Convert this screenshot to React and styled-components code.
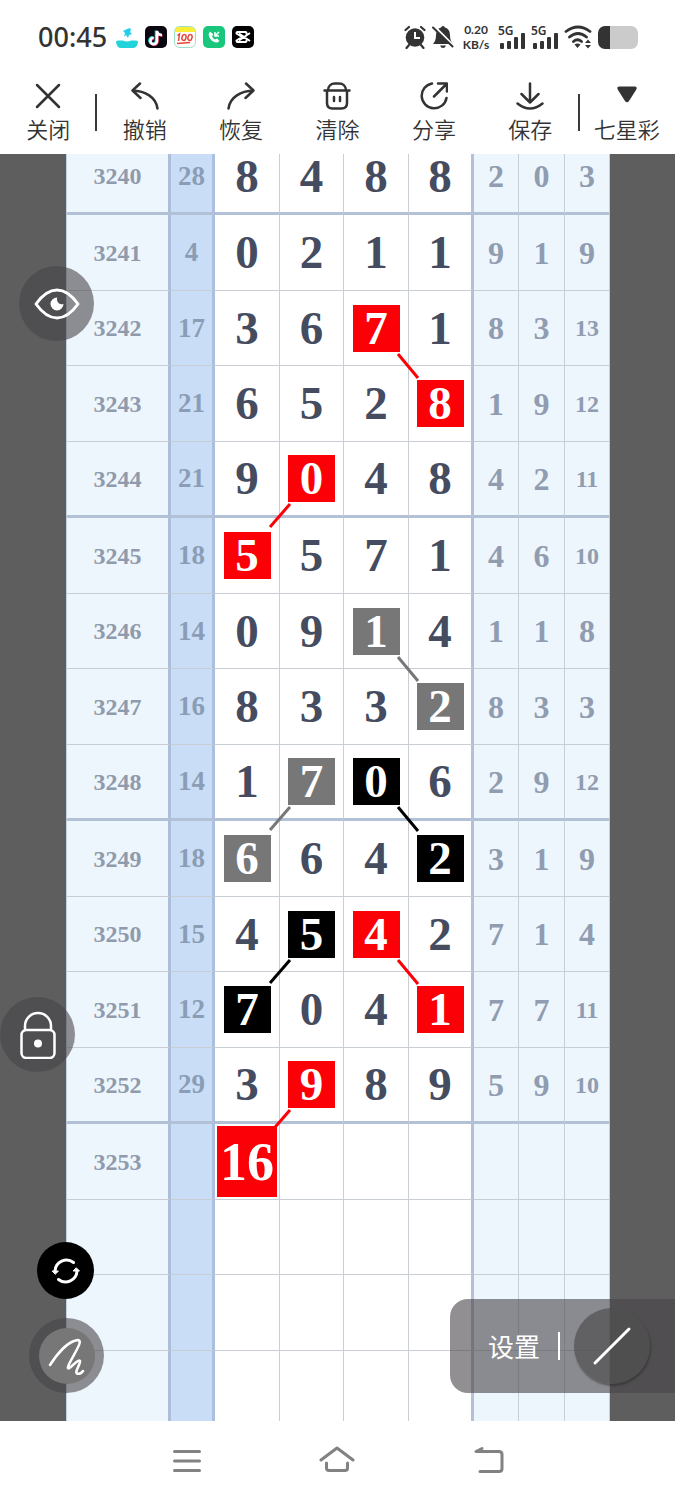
import React from "react"
import styled, { createGlobalStyle, css } from "styled-components"

const GlobalStyle = createGlobalStyle`
  * {
    box-sizing: border-box;
  }
  body {
    margin: 0;
    background: #fff;
    font-family: "Noto Sans", "Noto Sans CJK SC", sans-serif;
    color: #333;
  }
  button {
    margin: 0;
    padding: 0;
    border: none;
    background: none;
    color: inherit;
    font: inherit;
    cursor: pointer;
  }
  svg {
    display: block;
    flex: none;
  }
`

const Screen = styled.div`
  display: flex;
  flex-direction: column;
  height: 100vh;
  min-width: 480px;
  overflow: hidden;
`

const StatusBar = styled.header`
  display: flex;
  align-items: center;
  justify-content: space-between;
  height: 74px;
  padding: 0 37px 0 38px;
`

const StatusGroup = styled.div`
  display: flex;
  align-items: center;
  gap: ${props => props.gap}px;
`

const Clock = styled.time`
  margin-right: 2px;
  font-size: 27px;
  line-height: 32px;
  font-weight: 500;
`

const Speed = styled.div`
  display: flex;
  flex-direction: column;
  align-items: center;
  width: 32px;
  font-family: Lato, sans-serif;
  font-size: 12px;
  font-weight: bold;
  line-height: 15px;
`

const Signal = styled.div`
  display: flex;
  flex-direction: column;
  width: 27px;
  font-size: 12px;
  font-weight: 600;
  line-height: 10px;
`

const Bars = styled.div`
  display: flex;
  align-items: flex-end;
  justify-content: flex-end;
  gap: 3px;
  height: 13px;
`

const Bar = styled.span`
  width: 4px;
  height: ${props => props.height}px;
  border-radius: 1px;
  background: #333;
`

const Battery = styled.div`
  width: 40px;
  height: 23px;
  border-radius: 7px;
  background: linear-gradient(to right, #333 30%, #cbcbcb 30%);
`

const Toolbar = styled.nav`
  display: flex;
  height: 80px;
  padding-top: 8px;
`

const Tool = styled.button`
  flex: 1;
  display: flex;
  flex-direction: column;
  align-items: center;
  gap: 6px;
  height: 64px;
  font-size: 22px;
  font-weight: 350;
  line-height: 26px;
  white-space: nowrap;
`

const ToolDivider = styled.span`
  width: 2px;
  height: 37px;
  margin: 12px -1px 0;
  background: #3a3a3a;
`

const Board = styled.main`
  position: relative;
  flex: 1;
  min-height: 0;
  padding: 0 65px 0 66px;
  overflow: hidden;
  background: #5e5e5e;
`

// the first row is half scrolled out of the board
const Chart = styled.table`
  width: 100%;
  margin-top: -14px;
  table-layout: fixed;
  border-collapse: separate;
  border-spacing: 0;
  background: #fff;
  font-family: "Liberation Serif", serif;
  font-weight: bold;
  text-align: center;
`

const Col = styled.col`
  width: ${props => props.w}px;
`

const Row = styled.tr`
  height: ${props => (props.short ? 75 : 76)}px;
  td,
  th {
    border-bottom: ${props =>
      props.thick ? "3px solid #b3c1d6" : "1px solid #c9ced4"};
  }
`

const cell = css`
  padding: 0;
  line-height: 1;
  font-weight: bold;
`

const Period = styled.th`
  ${cell}
  border-right: 3px solid #adbfd8;
  border-left: 1px solid #c3d0e0;
  background: #edf5fd;
  color: #8f9bac;
  font-size: 24px;
`

const Sum = styled.td`
  ${cell}
  border-right: 3px solid #adbfdf;
  background: #c9ddf6;
  color: #8b9db5;
  font-size: 27px;
`

const Digit = styled.td`
  ${cell}
  position: relative;
  border-right: ${props =>
    props.last ? "3px solid #b3c1d6" : "1px solid #c9ced4"};
  color: #454c60;
  font-size: 47px;
`

const Side = styled.td`
  ${cell}
  border-right: 1px solid #c5cedb;
  background: #edf5fd;
  color: #909cb0;
  font-size: ${props => (props.small ? 24 : 32)}px;
`

const Mark = styled.span`
  display: flex;
  align-items: center;
  justify-content: center;
  width: ${props => (props.big ? 60 : 47)}px;
  height: ${props => (props.big ? 71 : 47)}px;
  margin: 0 auto;
  background: ${props => props.tone};
  color: #fff;
  font-size: ${props => (props.big ? 54 : 47)}px;
`

const Link = styled.svg`
  position: absolute;
  z-index: 1;
  bottom: -14px;
  ${props => (props.$dir === "right" ? "right: -12px;" : "left: -12px;")}
`

const Round = styled.button`
  position: absolute;
  display: flex;
  align-items: center;
  justify-content: center;
  z-index: 2;
  width: ${props => props.size}px;
  height: ${props => props.size}px;
  border-radius: 50%;
  background: ${props => props.tone || "rgba(70, 68, 72, 0.59)"};
  color: #fff;
`

const EyeButton = styled(Round)`
  top: 112px;
  left: 19px;
`

const LockButton = styled(Round)`
  top: 843px;
  left: 0;
`

const SyncButton = styled(Round)`
  bottom: 122px;
  left: 37px;
`

const PenButton = styled(Round)`
  bottom: 28px;
  left: 29px;
`

const PenCore = styled.span`
  display: flex;
  align-items: center;
  justify-content: center;
  width: 56px;
  height: 56px;
  border-radius: 50%;
  background: #777;
`

const Settings = styled.div`
  position: absolute;
  right: 0;
  bottom: 28px;
  z-index: 2;
  display: flex;
  align-items: center;
  width: 225px;
  height: 94px;
  padding-left: 38px;
  border-radius: 18px 0 0 18px;
  background: rgba(72, 68, 72, 0.6);
  color: #fff;
  font-size: 26px;
`

const SettingsDivider = styled.span`
  width: 2px;
  height: 28px;
  margin: 0 14px 0 18px;
  background: #fff;
`

const LineButton = styled.button`
  display: flex;
  align-items: center;
  justify-content: center;
  width: 76px;
  height: 76px;
  border-radius: 50%;
  background: rgba(80, 80, 80, 0.7);
  box-shadow: 1px 2px 2px rgba(40, 40, 40, 0.5);
`

const NavBar = styled.nav`
  display: flex;
  height: 79px;
  padding: 0 112px;
  color: #828282;
`

const NavButton = styled.button`
  flex: 1;
  display: flex;
  align-items: center;
  justify-content: center;
`

const Stroke = ({ size = 28, width = 2.5, children, ...rest }) =>
  <svg
    width={size}
    height={size}
    viewBox={`0 0 ${size} ${size}`}
    fill="none"
    stroke="currentColor"
    strokeWidth={width}
    strokeLinecap="round"
    strokeLinejoin="round"
    aria-hidden="true"
    {...rest}
  >
    {children}
  </svg>

const tools = [
  {
    label: "关闭",
    icon: <path d="M3 3l22 22M25 3L3 25" />,
    divider: true,
  },
  {
    label: "撤销",
    icon: <path d="M9 1.500L1.500 8.500l8 7.500M1.500 8.500C14 9 25 15 26.500 26.500" />,
  },
  {
    label: "恢复",
    icon: <path d="M19 1.500L26.500 8.500l-8 7.500M26.500 8.500C14 9 3 15 1.500 26.500" />,
  },
  {
    label: "清除",
    icon: (
      <path d="M1.500 8.500h25M5 8.500C5 4 8 1.500 12 1.500h4c4 0 7 2.500 7 7M4 8.500V21q0 5.500 5.500 5.500h9q5.500 0 5.500-5.500V8.500M11 15v4M17 15v4" />
    ),
  },
  {
    label: "分享",
    icon: (
      <path d="M12 1.500A12.500 12.500 0 1 0 26.500 16M14 14.500L26.500 2M18 1.500h9v8" />
    ),
  },
  {
    label: "保存",
    icon: <path d="M14 1.500v19M5.500 12l8.500 8.500 8.500-8.500M1.500 21.500q12.500 10 25 0" />,
    divider: true,
  },
  {
    label: "七星彩",
    icon: (
      <path
        d="M6.500 4.500h15q3.500 0 1.500 3.500l-7 11q-2 2.500-4 0L5 8q-2-3.500 1.500-3.500z"
        fill="currentColor"
        stroke="none"
      />
    ),
  },
]

const RED = "#fb0007"
const GRAY = "#777"
const BLACK = "#000"

// marks: column index -> [colour, direction of the line to the next row]
const rows = [
  { id: 3240, sum: 28, digits: "8488", side: [2, 0, 3], thick: true },
  { id: 3241, sum: 4, digits: "0211", side: [9, 1, 9] },
  { id: 3242, sum: 17, digits: "3671", side: [8, 3, 13], marks: { 2: [RED, "right"] } },
  { id: 3243, sum: 21, digits: "6528", side: [1, 9, 12], marks: { 3: [RED] } },
  { id: 3244, sum: 21, digits: "9048", side: [4, 2, 11], marks: { 1: [RED, "left"] }, thick: true },
  { id: 3245, sum: 18, digits: "5571", side: [4, 6, 10], marks: { 0: [RED] } },
  { id: 3246, sum: 14, digits: "0914", side: [1, 1, 8], marks: { 2: [GRAY, "right"] } },
  { id: 3247, sum: 16, digits: "8332", side: [8, 3, 3], marks: { 3: [GRAY] } },
  {
    id: 3248,
    sum: 14,
    digits: "1706",
    side: [2, 9, 12],
    marks: { 1: [GRAY, "left"], 2: [BLACK, "right"] },
    thick: true,
  },
  { id: 3249, sum: 18, digits: "6642", side: [3, 1, 9], marks: { 0: [GRAY], 3: [BLACK] } },
  { id: 3250, sum: 15, digits: "4542", side: [7, 1, 4], marks: { 1: [BLACK, "left"], 2: [RED, "right"] } },
  { id: 3251, sum: 12, digits: "7041", side: [7, 7, 11], marks: { 0: [BLACK], 3: [RED] } },
  { id: 3252, sum: 29, digits: "3989", side: [5, 9, 10], marks: { 1: [RED, "left"] }, thick: true },
  { id: 3253, digits: ["16"], marks: { 0: [RED] } },
  {},
  {},
  {},
]

const columns = [105, 44, 65, 64, 65, 65, 45, 46, 45]

const Connector = ({ dir, tone }) =>
  <Link $dir={dir} width="24" height="26" viewBox="0 0 24 26" aria-hidden="true">
    <path
      d={dir === "right" ? "M2 1L22 25" : "M22 1L2 24"}
      stroke={tone}
      strokeWidth="3"
    />
  </Link>

const DigitCell = ({ value, mark, last }) => {
  const [tone, dir] = mark || []
  return (
    <Digit last={last}>
      {mark
        ? <Mark tone={tone} big={value.length > 1}>{value}</Mark>
        : value}
      {dir && <Connector dir={dir} tone={tone} />}
    </Digit>
  )
}

const ChartRow = ({ row, short }) => {
  const { id, sum, digits = "", side = [], marks = {}, thick } = row
  return (
    <Row thick={thick} short={short}>
      <Period scope="row">{id}</Period>
      <Sum>{sum}</Sum>
      {[0, 1, 2, 3].map(i =>
        <DigitCell key={i} value={digits[i]} mark={marks[i]} last={i === 3} />
      )}
      {[0, 1, 2].map(i =>
        <Side key={i} small={side[i] > 9}>{side[i]}</Side>
      )}
    </Row>
  )
}

const SignalMeter = () =>
  <Signal>
    5G
    <Bars>
      {[6, 8, 12, 16].map(h => <Bar key={h} height={h} />)}
    </Bars>
  </Signal>

const AppIcons = () =>
  <StatusGroup gap={7}>
    <svg width="22" height="22" viewBox="0 0 22 22" aria-hidden="true">
      <path d="M0 16q0-1.500 2-1.500h5q4 2 8 0h5q2 0 2 1.500-1 6-5 6H5q-4 0-5-6z" fill="#22d3dc" />
      <path d="M7 5l4-2 3-1 1 2-1 2 2 2-3 1-1 3-2-3-2 2 1-4z" fill="#22cfe8" />
    </svg>
    <svg width="22" height="22" viewBox="0 0 22 22" aria-hidden="true">
      <rect width="22" height="22" rx="5" fill="#0b0710" />
      <g fill="none" strokeWidth="2.500">
        <path d="M11 4.500v10a3.300 3.300 0 1 1-3.300-3.300M11 4.500q.5 4 5 4" stroke="#27e5e3" />
        <path d="M12.500 5.500v10a3.300 3.300 0 1 1-3.300-3.300M12.500 5.500q.5 4 5 4" stroke="#f3305b" />
        <path d="M12 5v10a3.300 3.300 0 1 1-3.300-3.300M12 5q.5 4 5 4" stroke="#fff" />
      </g>
    </svg>
    <svg width="22" height="22" viewBox="0 0 22 22" aria-hidden="true">
      <rect x=".5" y=".5" width="21" height="21" rx="5" fill="#fff" stroke="#9ae0c4" />
      <path d="M1 6V5q0-4 4-4h12q4 0 4 4v1z" fill="#faed35" />
      <g fill="none" stroke="#e5493a" strokeWidth="1.500">
        <path d="M3.500 9.500L5.500 8 4.500 15M3 17.500l13-1" />
        <ellipse cx="10" cy="11.500" rx="2" ry="3" transform="rotate(15 10 11.500)" />
        <ellipse cx="16" cy="11.500" rx="2" ry="3" transform="rotate(15 16 11.500)" />
      </g>
    </svg>
    <svg width="22" height="22" viewBox="0 0 22 22" aria-hidden="true">
      <rect width="22" height="22" rx="5" fill="#18c77c" />
      <path
        d="M7 5.500q-2 2-1 5 2 5 7 6 2 0 3.500-1.500l-2.500-2.500-2 1q-2.500-1-3-3.500l1.500-1.500z"
        fill="#fff"
      />
      <path d="M12 6v4h4M12.500 9.500L16 6" fill="none" stroke="#fff" strokeWidth="1.500" />
    </svg>
    <svg width="22" height="22" viewBox="0 0 22 22" aria-hidden="true">
      <rect width="22" height="22" rx="5" fill="#000" />
      <path
        d="M18 7L7 14.500M18 15L7 7.500M14.500 8.500V7q0-1-1-1h-8q-1 0-1 1v.5L10 11l-5.500 3.500v.5q0 1 1 1h8q1 0 1-1v-1.500"
        fill="none"
        stroke="#fff"
        strokeWidth="2"
        strokeLinejoin="round"
      />
    </svg>
  </StatusGroup>

const AlarmIcon = () =>
  <svg width="22" height="24" viewBox="0 0 22 24" aria-hidden="true">
    <g fill="none" stroke="#333" strokeWidth="2.200" strokeLinecap="round">
      <path d="M1.500 5L5 2M20.500 5L17 2M5 20l-2.500 3M17 20l2.500 3" />
    </g>
    <circle cx="11" cy="12.500" r="9.300" fill="#333" />
    <path d="M11 7v6h5" fill="none" stroke="#fff" strokeWidth="2" />
  </svg>

const MuteIcon = () =>
  <svg width="22" height="24" viewBox="0 0 22 24" aria-hidden="true">
    <path
      d="M11 1q1.500 0 2 1.500 5 1.500 5 7.500 0 6 3 9H1q3-3 3-9 0-6 5-7.500Q9.500 1 11 1zM8 20.500h6q-1 2.500-3 2.500t-3-2.500z"
      fill="#333"
    />
    <path d="M1 .5l21 21" stroke="#fff" strokeWidth="3" />
    <path d="M1 2.500l19.500 19" stroke="#333" strokeWidth="2" strokeLinecap="round" />
  </svg>

const WifiIcon = () =>
  <svg width="28" height="24" viewBox="0 0 28 24" aria-hidden="true">
    <g fill="none" stroke="#333" strokeWidth="2.800" strokeLinecap="round">
      <path d="M2 6.500Q14-2.500 26 6.500M5.500 12Q14 5 22.500 12M9.500 16.500Q13.500 13 17.500 16.500" />
    </g>
    <path d="M10.500 19.500q3-2 6 0l-3 3.500zM21 18l3-3.500 3 3.500zM21 20l3 3.500 3-3.500z" fill="#333" />
  </svg>

const App = () =>
  <Screen>
    <GlobalStyle />
    <StatusBar>
      <StatusGroup gap={7}>
        <Clock>00:45</Clock>
        <AppIcons />
      </StatusGroup>
      <StatusGroup gap={6}>
        <AlarmIcon />
        <MuteIcon />
        <Speed>
          <span>0.20</span>
          <span>KB/s</span>
        </Speed>
        <SignalMeter />
        <SignalMeter />
        <WifiIcon />
        <Battery />
      </StatusGroup>
    </StatusBar>
    <Toolbar>
      {tools.map(({ label, icon, divider }) =>
        <React.Fragment key={label}>
          <Tool type="button">
            <Stroke>{icon}</Stroke>
            {label}
          </Tool>
          {divider && <ToolDivider />}
        </React.Fragment>
      )}
    </Toolbar>
    <Board>
      <Chart>
        <colgroup>
          {columns.map((w, i) => <Col key={i} w={w} />)}
        </colgroup>
        <tbody>
          {rows.map((row, i) =>
            <ChartRow key={i} row={row} short={i === 0 || i % 4 === 2} />
          )}
        </tbody>
      </Chart>
      <EyeButton type="button" size={75} aria-label="显示">
        <Stroke size={46} width={3}>
          <path d="M2 23Q12 9 23 9t21 14Q34 37 23 37T2 23z" />
          <path d="M23 16.500a6.500 6.500 0 1 0 6.500 6.500q-3 1-5-1t-1.500-5.500z" fill="currentColor" stroke="none" />
        </Stroke>
      </EyeButton>
      <LockButton type="button" size={75} aria-label="锁定">
        <Stroke size={48}>
          <rect x="7.500" y="19" width="33" height="28" rx="5" />
          <path d="M11 19v-4a13 13 0 0 1 26 0v4" />
          <circle cx="24" cy="32.500" r="4" fill="currentColor" stroke="none" />
        </Stroke>
      </LockButton>
      <SyncButton type="button" size={57} tone="#000" aria-label="切换">
        <Stroke size={30} width={3}>
          <path d="M4 15A11.500 11.500 0 0 1 22.500 6.500M26 15A11.500 11.500 0 0 1 7.500 23.500" />
          <path d="M1.500 15h6L4.500 18zM22.500 15h6L25.500 12z" fill="currentColor" strokeWidth="1" />
        </Stroke>
      </SyncButton>
      <PenButton type="button" size={75} aria-label="画笔">
        <PenCore>
          <Stroke size={38}>
            <path d="M2 28C9 17 20 4 30 3c7 0-9 21-10 27-1 6 10-9 12-6 1 3-7 12-2 13q3 0 5-3" />
          </Stroke>
        </PenCore>
      </PenButton>
      <Settings>
        <button type="button">设置</button>
        <SettingsDivider />
        <LineButton type="button" aria-label="直线">
          <Stroke size={40} width={3}>
            <path d="M3 37L37 3" />
          </Stroke>
        </LineButton>
      </Settings>
    </Board>
    <NavBar>
      <NavButton type="button" aria-label="菜单">
        <Stroke size={30} width={3}>
          <path d="M2.500 5.500h25M2.500 15h25M2.500 24.500h25" />
        </Stroke>
      </NavButton>
      <NavButton type="button" aria-label="主页">
        <Stroke size={36} width={3}>
          <path d="M2 17L18 5l16 12M7.500 20v5q0 2.500 2.500 2.500h16q2.500 0 2.500-2.500v-5" />
        </Stroke>
      </NavButton>
      <NavButton type="button" aria-label="返回">
        <Stroke size={34} width={3}>
          <path d="M11 4.500L5 7.500h23q3 0 3 3v14q0 3-3 3H9" />
        </Stroke>
      </NavButton>
    </NavBar>
  </Screen>

export default App
